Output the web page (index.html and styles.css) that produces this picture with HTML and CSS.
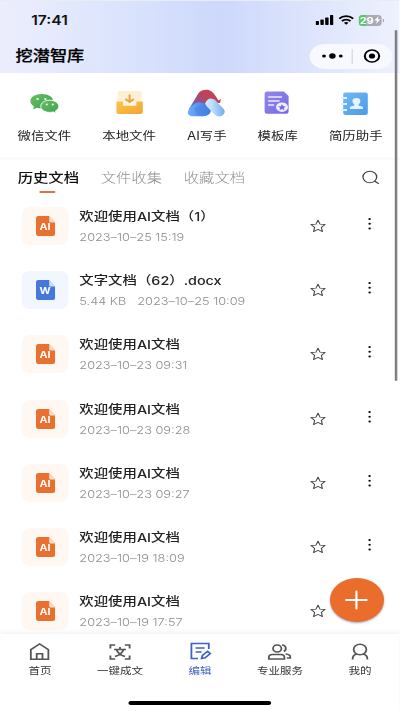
FILE: index.html
```html
<!DOCTYPE html>
<html lang="zh-CN">
<head>
<meta charset="utf-8">
<title>挖潜智库</title>
<link rel="stylesheet" href="styles.css">
</head>
<body>
<svg class="defs" width="0" height="0">
  <defs>
    <symbol id="file" viewBox="0 0 16 20"><path d="M2 0H11L16 6.500V18a2 2 0 0 1-2 2H2a2 2 0 0 1-2-2V2a2 2 0 0 1 2-2Z" fill="currentColor"/><path d="M11 0L16 6.500H12a1 1 0 0 1-1-1Z" fill="#fff" fill-opacity=".75"/></symbol>
    <symbol id="star" viewBox="0 0 14 14"><path d="M7 1.200L8.700 5.100L12.900 5.500L9.800 8.300L10.700 12.600L7 10.400L3.300 12.600L4.200 8.300L1.100 5.500L5.300 5.100Z" fill="none" stroke="#444" stroke-width=".9" stroke-linejoin="round"/></symbol>
    <symbol id="dots" viewBox="0 0 4 14"><circle cx="2" cy="2" r="1"/><circle cx="2" cy="6.700" r="1"/><circle cx="2" cy="11.400" r="1"/></symbol>
    <linearGradient id="gold" x2="1" y2="1"><stop stop-color="#f9c64c"/><stop offset="1" stop-color="#f3a532"/></linearGradient>
    <linearGradient id="violet" x2="1" y2="1"><stop stop-color="#9389ee"/><stop offset="1" stop-color="#7468e2"/></linearGradient>
    <linearGradient id="sky" x2="1" y2="1"><stop stop-color="#72b9f4"/><stop offset="1" stop-color="#4a9ae9"/></linearGradient>
    <linearGradient id="green" x2="1" y2="1"><stop stop-color="#68bf62"/><stop offset="1" stop-color="#3ca151"/></linearGradient>
    <linearGradient id="red" x1="1" x2="0" y2="1"><stop stop-color="#d6404b"/><stop offset=".45" stop-color="#b9445f"/><stop offset="1" stop-color="#5368d5"/></linearGradient>
    <linearGradient id="blue" x2="1"><stop stop-color="#6db0fb"/><stop offset="1" stop-color="#3f70dd"/></linearGradient>
    <linearGradient id="ice" x2=".7" y2="1"><stop stop-color="#d3edff"/><stop offset=".4" stop-color="#c0e2fd"/><stop offset="1" stop-color="#78aef0"/></linearGradient>
  </defs>
</svg>
<div class="phone">
  <header class="header">
    <div class="status">
      <span class="time">17:41</span>
      <div class="signals">
        <svg width="15" height="10" viewBox="0 0 15 10"><rect y="6" width="2.800" height="4" rx=".7"/><rect x="4" y="4.500" width="2.800" height="5.500" rx=".7"/><rect x="8" y="2.500" width="2.800" height="7.500" rx=".7"/><rect x="12" width="2.800" height="10" rx=".7"/></svg>
        <svg width="13" height="10" viewBox="0 0 13 10" fill="none" stroke="#000" stroke-width="1.700"><path d="M.7 3.700C4 .2 9 .2 12.300 3.700M2.900 6.200C5 4 8 4 10.100 6.200"/><path d="M6.500 9.700L4.600 7.800Q6.500 6.400 8.400 7.800Z" fill="#000" stroke="none"/></svg>
        <div class="battery"><span>29</span><svg width="5" height="8" viewBox="0 0 5 8"><path d="M3.500 0L0 4.500H2.200L1.300 8L5 3.300H2.700Z" fill="#fff"/></svg></div>
      </div>
    </div>
    <div class="titlebar">
      <h1>挖潜智库</h1>
      <div class="capsule">
        <svg width="20" height="10" viewBox="0 0 20 10"><circle cx="3" cy="5" r="1.600"/><circle cx="10" cy="5" r="2.700"/><circle cx="17" cy="5" r="1.600"/></svg>
        <i></i>
        <svg width="16" height="16" viewBox="0 0 16 16"><circle cx="8" cy="8" r="6" fill="none" stroke="#000" stroke-width="1.700"/><circle cx="8" cy="8" r="2.600"/></svg>
      </div>
    </div>
  </header>

  <nav class="tools">
    <a><svg width="26" height="28" viewBox="0 0 26 28"><path d="M10.800 5C5.300 5 1.300 8.200 1.300 12c0 2.300 1.200 4.100 3 5.400L3.600 20.500l3-1.700c1.300.4 2.700.6 4.200.6 5.500 0 9.500-3.500 9.500-7.400S16.300 5 10.800 5Z" fill="url(#green)"/><path d="M17.500 11.200c-4.300 0-7.500 2.700-7.500 6.100s3.200 6.100 7.500 6.100c1 0 2-.2 2.900-.5l2.400 1.400-.6-2.300c1.700-1.200 2.800-2.700 2.800-4.700 0-3.400-3.200-6.100-7.500-6.100Z" fill="url(#green)" stroke="#fff" stroke-width=".8"/><g fill="#e8ffe8"><circle cx="7.300" cy="10" r="1.100"/><circle cx="13.800" cy="10" r="1.100"/><circle cx="15" cy="15.500" r=".9"/><circle cx="20" cy="15.500" r=".9"/></g></svg><span>微信文件</span></a>
    <a><svg width="26" height="28" viewBox="0 0 26 28"><rect x="3" y="2" width="20" height="20" rx="2" fill="#fdf0d4"/><path d="M2 12.500H7.500V16.500H18.500V12.500H24V23a2 2 0 0 1-2 2H4a2 2 0 0 1-2-2Z" fill="url(#gold)"/><path d="M7.500 12.500H18.500V16.500H7.500Z" fill="#fff7e6"/><path d="M13 5.500V13M9.500 10L13 13.200L16.500 10" fill="none" stroke="#e9a540" stroke-width="1.700"/></svg><span>本地文件</span></a>
    <a><svg width="32" height="28" viewBox="0 0 32 28"><path d="M1.500 20L9 5C10.500 2 13 .7 16 .7C19.500 .7 21.500 3 24 7.500L26 11.500L28 10L27.500 14L22 14L16 13L12 20Z" fill="url(#red)"/><path d="M8.500 13.500C5 14.500 3 17.500 1.300 20.500C-.7 24.500 1 27.300 5 27.300H12.500C17.500 27.300 20 24.500 19.500 21C18.500 16.500 13 12.500 8.500 13.500Z" fill="url(#blue)"/><path d="M6 20C9 15.500 16 15 19.500 20C20 24.500 17 27.300 12.500 27.300C9 26 6.500 23.500 6 20Z" fill="#4a86e6" fill-opacity=".6"/><rect x="18.500" y="8.500" width="9.500" height="20" rx="4.700" transform="rotate(-38 23.250 18.500)" fill="url(#ice)"/></svg><span>AI写手</span></a>
    <a><svg width="26" height="28" viewBox="0 0 26 28"><path d="M4.500 2.500H18.500L22.500 7V22.700a2 2 0 0 1-2 2H4.500a2 2 0 0 1-2-2V4.500a2 2 0 0 1 2-2Z" fill="url(#violet)"/><path d="M5.500 8H17M5.500 12H15M5.500 16H10.500" stroke="#eeeaff" stroke-width="1.400"/><ellipse cx="17" cy="18.200" rx="5" ry="4.800" fill="#f0edff"/><path d="M17 15.300l1 2 2.200.2-1.700 1.500.6 2.200-2.100-1.200-2.100 1.200.6-2.200-1.700-1.500 2.200-.2Z" fill="#7669dd"/></svg><span>模板库</span></a>
    <a><svg width="26" height="28" viewBox="0 0 26 28"><rect x="3" y="3.500" width="20.500" height="22.500" rx="2" fill="url(#sky)"/><path d="M1.500 9H6M1.500 15H6M1.500 21H6" stroke="#fff" stroke-width="2"/><path d="M1.500 9H5M1.500 15H5M1.500 21H5" stroke="#a9d6f8" stroke-width=".8"/><path d="M14 9a3.300 3.300 0 0 1 3.300 3.300c0 1.300-.7 2.300-1.500 3.200v1l3.600 1.300v2.200H8.600v-2.200l3.600-1.300v-1c-.8-.9-1.500-1.900-1.500-3.200A3.300 3.300 0 0 1 14 9Z" fill="#e6f3ff"/></svg><span>简历助手</span></a>
  </nav>

  <nav class="tabs">
    <a class="active">历史文档</a><a>文件收集</a><a>收藏文档</a>
    <svg width="17" height="17" viewBox="0 0 17 17" fill="none" stroke="#444" stroke-width="1.100"><circle cx="7.200" cy="8" r="5.700"/><path d="M11.400 12.200L14.700 14.700"/></svg>
  </nav>

  <main class="list">
    <article><div class="thumb ai"><svg><use href="#file"/></svg><b>AI</b></div><div class="info"><h2>欢迎使用AI文档（1）</h2><p>2023–10–25 15:19</p></div><svg class="star"><use href="#star"/></svg><svg class="more"><use href="#dots"/></svg></article>
    <article><div class="thumb word"><svg><use href="#file"/></svg><b>W</b></div><div class="info"><h2>文字文档（62）.docx</h2><p><span class="size">5.44 KB</span>2023–10–25 10:09</p></div><svg class="star"><use href="#star"/></svg><svg class="more"><use href="#dots"/></svg></article>
    <article><div class="thumb ai"><svg><use href="#file"/></svg><b>AI</b></div><div class="info"><h2>欢迎使用AI文档</h2><p>2023–10–23 09:31</p></div><svg class="star"><use href="#star"/></svg><svg class="more"><use href="#dots"/></svg></article>
    <article><div class="thumb ai"><svg><use href="#file"/></svg><b>AI</b></div><div class="info"><h2>欢迎使用AI文档</h2><p>2023–10–23 09:28</p></div><svg class="star"><use href="#star"/></svg><svg class="more"><use href="#dots"/></svg></article>
    <article><div class="thumb ai"><svg><use href="#file"/></svg><b>AI</b></div><div class="info"><h2>欢迎使用AI文档</h2><p>2023–10–23 09:27</p></div><svg class="star"><use href="#star"/></svg><svg class="more"><use href="#dots"/></svg></article>
    <article><div class="thumb ai"><svg><use href="#file"/></svg><b>AI</b></div><div class="info"><h2>欢迎使用AI文档</h2><p>2023–10–19 18:09</p></div><svg class="star"><use href="#star"/></svg><svg class="more"><use href="#dots"/></svg></article>
    <article><div class="thumb ai"><svg><use href="#file"/></svg><b>AI</b></div><div class="info"><h2>欢迎使用AI文档</h2><p>2023–10–19 17:57</p></div><svg class="star"><use href="#star"/></svg><svg class="more"><use href="#dots"/></svg></article>
  </main>

  <footer class="bottom">
    <nav>
      <a><svg viewBox="0 0 20 20"><path d="M2.700 7.700L10 2L17.300 7.700V17.200H2.700ZM7.600 17V11.700H12.400V17"/></svg><span>首页</span></a>
      <a><svg viewBox="0 0 20 20"><path d="M2 6.500V3H6M14 3H18V6.500M18 13.500V17H14M6 17H2V13.500M5 7.500H15M10 5V7.500M7 7.500Q8.500 12.500 14.200 14.500M13 7.500Q11.500 12.500 5.800 14.500"/></svg><span>一键成文</span></a>
      <a class="current"><svg viewBox="0 0 20 20"><path d="M8 16.500H2.500V1.500H17V7M6 6H13.500M6 10H11M11 16.500L11.700 13.500L16 9.300L18.200 11.500L14 15.800Z"/></svg><span>编辑</span></a>
      <a><svg viewBox="0 0 20 20"><circle cx="8" cy="6.500" r="3.500"/><path d="M1 17V15.500Q1 12.500 4 12.500H11Q14 12.500 14 15.500V17ZM12 3A3.500 3.500 0 0 1 13.500 9.500M15 12Q19 12.500 19 15V16H16"/></svg><span>专业服务</span></a>
      <a><svg viewBox="0 0 20 20"><circle cx="10" cy="7.500" r="5.300"/><path d="M3.800 17.500C3.800 14.500 5 12.500 7.500 12M16.200 17.500C16.200 14.500 15 12.500 12.500 12"/></svg><span>我的</span></a>
    </nav>
    <div class="home"></div>
  </footer>
  <button class="fab"><svg width="28" height="28" viewBox="0 0 28 28"><path d="M14 5.500V22.500M5.500 14H22.500" stroke="#fff" stroke-width="1.800" stroke-linecap="round"/></svg></button>
  <div class="scrollbar"></div>
</div>
</body>
</html>
```
FILE: styles.css
```css
* { box-sizing: border-box; }
html, body { margin: 0; width: 400px; height: 711px; overflow: hidden; background: #fff; }
.defs { position: absolute; }
/* The interface is laid out at 333.33px and widened to fill the window. */
.phone {
  position: relative; width: 333.33px; height: 711px; overflow: hidden;
  display: flex; flex-direction: column;
  transform: scaleX(1.2); transform-origin: left top;
  font-family: Inter, "Noto Sans CJK SC", sans-serif; color: #222;
}
h1, h2, p { margin: 0; white-space: nowrap; }
a { white-space: nowrap; }
svg { display: block; flex: none; }

.header { height: 73px; flex: none; background: linear-gradient(90deg, #eceefd 0, #dde5fd 27%, #cdd8fb 55%, #dbe3fc 75%, #eef1fe 100%); border-top: 1px solid #e9ecf3; }
.status { height: 38px; display: flex; align-items: center; justify-content: space-between; padding: 0 14px 0 26px; }
.time { font-size: 13px; font-weight: 600; color: #111; }
.signals { display: flex; align-items: center; gap: 4px; }
.battery { position: relative; width: 19.500px; height: 11px; border-radius: 3px; background: linear-gradient(90deg, #58c764 30%, #a8abb6 30%); display: flex; align-items: center; justify-content: center; gap: 1px; margin-right: 1px; color: #fff; font-size: 9px; font-weight: 700; line-height: 11px; }
.battery::after { content: ""; position: absolute; right: -2px; top: 4px; width: 1px; height: 3px; background: #a8abb6; }
.titlebar { display: flex; justify-content: space-between; align-items: center; height: 34px; padding: 0 6.500px 0 13px; }
h1 { font-size: 14.300px; font-weight: 500; line-height: 20px; color: #000; -webkit-text-stroke: .25px #000; }
.capsule { width: 68.500px; height: 25px; border-radius: 13px; background: #f8f9ff; display: flex; align-items: center; justify-content: space-between; padding: 0 9px 0 8.500px; }
.capsule i { width: 1px; height: 15px; background: #d4d6df; margin-left: -2px; }

.tools { height: 84px; flex: none; display: flex; justify-content: space-between; padding: 16px 14.500px 0 14.600px; }
.tools a { display: flex; flex-direction: column; align-items: center; gap: 10px; font-size: 11.200px; line-height: 18px; color: #222; }

.tabs { height: 43px; flex: none; border-top: 3px solid #fafafa; display: flex; align-items: center; gap: 18px; padding: 0 15.500px 5px 14.700px; font-size: 12.800px; line-height: 20px; color: #8e8e8e; font-weight: 300; }
.tabs .active { position: relative; color: #111; font-weight: 500; }
.tabs .active::after { content: ""; position: absolute; left: 18.500px; bottom: -5px; width: 13px; height: 1.500px; background: #dd7442; }
.tabs svg { margin-left: auto; }

.list { flex: 1; min-height: 0; overflow: hidden; padding: 7px 20px 0 18.300px; }
article { height: 64.200px; display: flex; align-items: flex-start; }
.thumb { position: relative; width: 38.500px; height: 38px; border-radius: 7px; display: flex; align-items: center; justify-content: center; }
.thumb svg { width: 16px; height: 20px; }
.thumb b { position: absolute; left: 0; right: 0; top: 14px; text-align: center; color: #fff; font-size: 9px; line-height: 12px; font-weight: 700; }
.ai { background: #fff8f2; color: #e9702f; }
.word { background: #f1f6ff; color: #4678dc; }
.info { flex: 1; margin: 1px 0 0 9.300px; }
h2 { font-size: 12px; line-height: 18px; font-weight: 500; }
p { margin-top: 5px; font-size: 10.650px; line-height: 14px; color: #8e8e8e; font-weight: 300; }
.size { margin-right: 9px; }
.star { width: 14px; height: 14px; margin-top: 12px; margin-right: 33.500px; }
.more { width: 4px; height: 14px; margin-top: 10px; margin-right: 3.500px; }

.bottom { height: 77px; flex: none; background: #fff; box-shadow: 0 -1px 5px rgba(0,0,0,.07); z-index: 1; }
.bottom nav { display: flex; height: 67px; padding-top: 8px; }
.bottom a { width: 20%; display: flex; flex-direction: column; align-items: center; gap: 2px; font-size: 9.600px; line-height: 14px; color: #333; }
.bottom svg { width: 20px; height: 20px; fill: none; stroke: #555; stroke-width: 1.500; }
.bottom .current { color: #3f62bf; }
.bottom .current svg { stroke: #3f62c9; }
.home { width: 119px; height: 4px; border-radius: 2px; background: #000; margin: 0 auto; }

.fab { position: absolute; z-index: 2; left: 275px; top: 578px; width: 44.500px; height: 44px; border: 0; border-radius: 50%; padding: 0; background: #ea6d2c; display: flex; align-items: center; justify-content: center; box-shadow: 0 1px 2px rgba(40,60,110,.45); }
.scrollbar { position: absolute; z-index: 3; left: 328.500px; top: 30px; width: 2.500px; height: 351px; border-radius: 2px; background: #77787c; }
```
